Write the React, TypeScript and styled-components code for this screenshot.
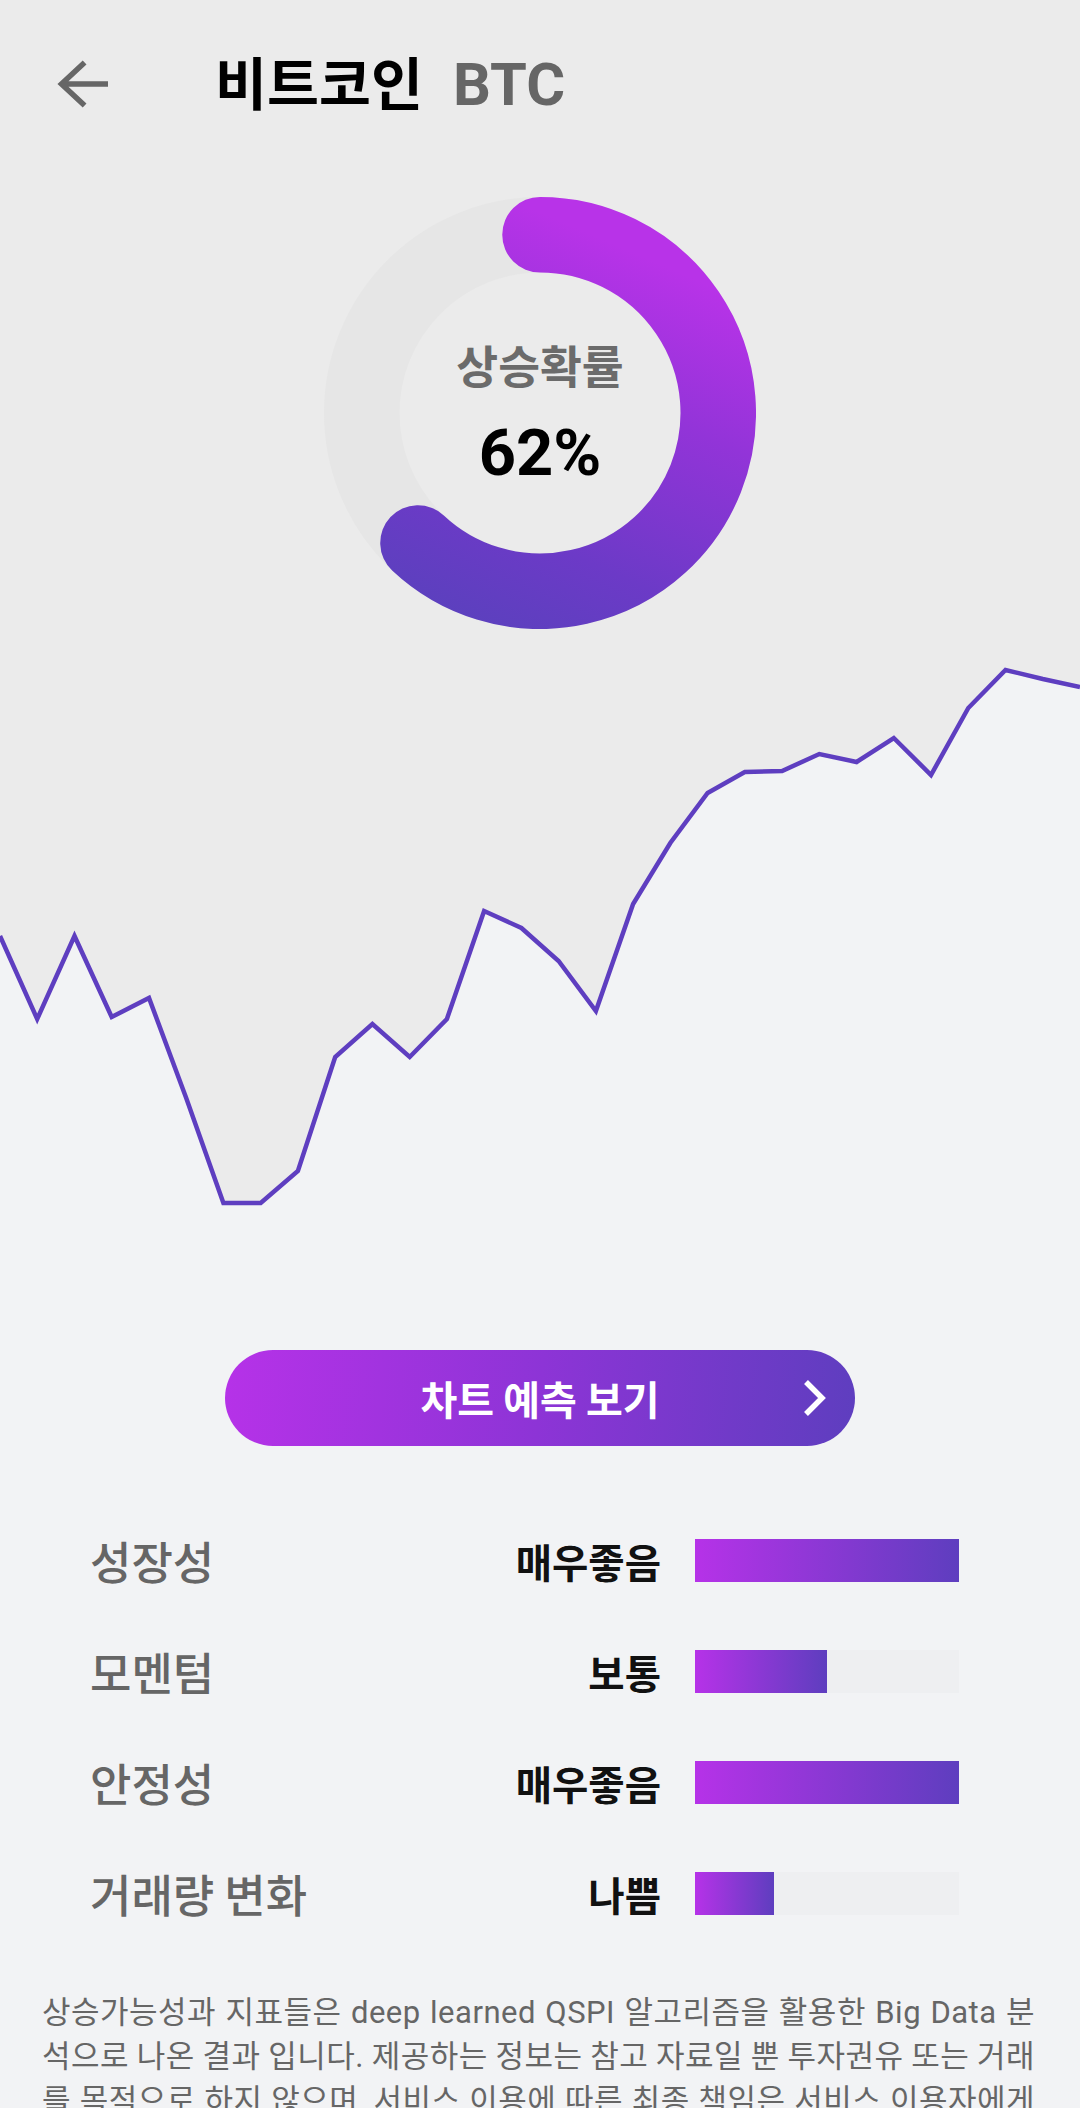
import React from "react";
import styled, { createGlobalStyle } from "styled-components";

const GlobalStyle = createGlobalStyle`
  html, body { margin: 0; padding: 0; background: #F2F3F5; }
  body { font-family: Roboto, "Noto Sans CJK KR", sans-serif; }
  * { box-sizing: border-box; }
`;

const Page = styled.div`
  width: 1080px;
  min-height: 2108px;
  overflow: hidden;
  background: #F2F3F5;
  display: flex;
  flex-direction: column;
`;

const Hero = styled.section`
  background: #EBEBEB;
  height: 650px;
  display: flex;
  flex-direction: column;
  align-items: center;
`;

const Header = styled.header`
  align-self: stretch;
  height: 168px;
  display: flex;
  align-items: center;
  padding-left: 57px;
`;

const BackButton = styled.button`
  border: 0;
  background: none;
  padding: 0;
  width: 56px;
  height: 56px;
  display: flex;
  margin-right: 102px;
  cursor: pointer;
`;

const Title = styled.h1`
  margin: 0;
  display: flex;
  align-items: baseline;
  gap: 30px;
  font-weight: 700;
`;

const TitleKo = styled.span`
  font-family: "Noto Sans CJK KR", sans-serif;
  font-size: 56.5px;
  line-height: 1;
  color: #000;
`;

const TitleCode = styled.span`
  font-family: Roboto, sans-serif;
  font-size: 59.5px;
  line-height: 1;
  color: #666;
`;

const Donut = styled.div`
  margin-top: 29px;
  width: 432px;
  height: 432px;
  display: grid;
  & > * {
    grid-area: 1 / 1;
  }
`;

const DonutCenter = styled.div`
  display: flex;
  flex-direction: column;
  align-items: center;
  justify-content: center;
  gap: 27px;
`;

const DonutLabel = styled.span`
  font-family: "Noto Sans CJK KR", sans-serif;
  font-size: 45.5px;
  line-height: 52px;
  font-weight: 700;
  color: #6b6b6b;
`;

const DonutValue = styled.span`
  font-family: Roboto, sans-serif;
  font-size: 65px;
  line-height: 72px;
  font-weight: 700;
  color: #000;
`;

const Chart = styled.svg`
  display: block;
  width: 1080px;
  height: 580px;
`;

const PredictButton = styled.button`
  margin: 120px auto 0;
  width: 630px;
  height: 96px;
  border: 0;
  border-radius: 48px;
  background: linear-gradient(95deg, #b632e8 0%, #8d34d6 50%, #5e3ebf 100%);
  display: grid;
  grid-template-columns: 1fr auto 1fr;
  align-items: center;
  padding: 0 27px;
  color: #fff;
  cursor: pointer;
`;

const ButtonText = styled.span`
  grid-column: 2;
  font-family: "Noto Sans CJK KR", sans-serif;
  font-size: 40px;
  font-weight: 700;
  line-height: 1;
`;

const ButtonChevron = styled.svg`
  grid-column: 3;
  justify-self: end;
  display: block;
`;

const Metrics = styled.ul`
  list-style: none;
  margin: 59px 0 0;
  padding: 0 121px 0 90px;
`;

const MetricRow = styled.li`
  height: 111px;
  display: grid;
  grid-template-columns: 1fr auto 264px;
  column-gap: 34px;
  align-items: center;
`;

const MetricLabel = styled.span`
  font-family: "Noto Sans CJK KR", sans-serif;
  font-size: 45px;
  font-weight: 500;
  color: #666;
`;

const MetricValue = styled.span`
  font-family: "Noto Sans CJK KR", sans-serif;
  font-size: 39.5px;
  font-weight: 700;
  color: #111;
`;

const BarTrack = styled.div`
  height: 43px;
  background: #eeeff1;
`;

const BarFill = styled.div<{ $pct: number }>`
  height: 100%;
  width: ${(p) => p.$pct}%;
  background: linear-gradient(90deg, #b632e8 0%, #5e3ebf 100%);
`;

const Disclaimer = styled.p`
  margin: 42px 0 0;
  padding: 0 45px 0 42px;
  font-family: Roboto, "Noto Sans CJK KR", sans-serif;
  font-size: 31px;
  letter-spacing: 0.5px;
  word-spacing: -1.8px;
  line-height: 44px;
  color: #666;
  text-align: justify;
  word-break: break-all;
`;

const chartY = [
  936, 1019, 936, 1017, 998, 1098, 1203, 1203, 1171, 1057, 1024, 1057, 1019, 911,
  928, 961, 1011, 904, 843, 793, 772, 771, 754, 762, 738, 775, 708, 670, 679, 687,
];
const CHART_TOP = 650;
const linePts = chartY
  .map((y, i) => `${((i * 1080) / 29).toFixed(1)},${y - CHART_TOP}`)
  .join(" ");
const areaPts = `0,0 ${linePts} 1080,0`;

const metrics = [
  { label: "성장성", value: "매우좋음", pct: 100 },
  { label: "모멘텀", value: "보통", pct: 50 },
  { label: "안정성", value: "매우좋음", pct: 100 },
  { label: "거래량 변화", value: "나쁨", pct: 30 },
];

const R = 178.25;
const PROB = 0.62;
const theta = PROB * 2 * Math.PI;
const endX = 216 + R * Math.sin(theta);
const endY = 216 - R * Math.cos(theta);
const arcPath = `M216 ${216 - R} A${R} ${R} 0 ${PROB > 0.5 ? 1 : 0} 1 ${endX.toFixed(2)} ${endY.toFixed(2)}`;

export default function App() {
  return (
    <>
      <GlobalStyle />
      <Page>
        <Hero>
          <Header>
            <BackButton aria-label="뒤로">
              <svg width="56" height="56" viewBox="0 0 56 56">
                <path
                  d="M51 28 H5 M27.6 6.5 L4.5 28 L27.6 49.5"
                  fill="none"
                  stroke="#666"
                  strokeWidth="5.5"
                />
              </svg>
            </BackButton>
            <Title>
              <TitleKo>비트코인</TitleKo>
              <TitleCode>BTC</TitleCode>
            </Title>
          </Header>
          <Donut>
            <svg width="432" height="432" viewBox="0 0 432 432">
              <defs>
                <linearGradient id="ringGrad" gradientUnits="userSpaceOnUse" x1="250" y1="30" x2="90" y2="400">
                  <stop offset="0" stopColor="#b833e8" />
                  <stop offset="0.35" stopColor="#9234d8" />
                  <stop offset="0.75" stopColor="#6c3ac7" />
                  <stop offset="1" stopColor="#5c40be" />
                </linearGradient>
              </defs>
              <circle cx="216" cy="216" r={R} fill="none" stroke="#e6e6e6" strokeWidth="75.5" />
              <path
                d={arcPath}
                fill="none"
                stroke="url(#ringGrad)"
                strokeWidth="75.5"
                strokeLinecap="round"
              />
            </svg>
            <DonutCenter>
              <DonutLabel>상승확률</DonutLabel>
              <DonutValue>62%</DonutValue>
            </DonutCenter>
          </Donut>
        </Hero>
        <Chart viewBox="0 0 1080 580" preserveAspectRatio="none">
          <polygon points={areaPts} fill="#EBEBEB" />
          <polyline
            points={linePts}
            fill="none"
            stroke="#5e3ec0"
            strokeWidth="4.5"
            strokeLinejoin="miter"
          />
        </Chart>
        <PredictButton>
          <ButtonText>차트 예측 보기</ButtonText>
          <ButtonChevron width="26" height="40" viewBox="0 0 26 40">
            <path d="M4 4 L20 20 L4 36" fill="none" stroke="#fff" strokeWidth="5.5" />
          </ButtonChevron>
        </PredictButton>
        <Metrics>
          {metrics.map((m) => (
            <MetricRow key={m.label}>
              <MetricLabel>{m.label}</MetricLabel>
              <MetricValue>{m.value}</MetricValue>
              <BarTrack>
                <BarFill $pct={m.pct} />
              </BarTrack>
            </MetricRow>
          ))}
        </Metrics>
        <Disclaimer>
          상승가능성과 지표들은 deep learned QSPI 알고리즘을 활용한 Big Data 분석으로 나온 결과
          입니다. 제공하는 정보는 참고 자료일 뿐 투자권유 또는 거래를 목적으로 하지 않으며, 서비스
          이용에 따른 최종 책임은 서비스 이용자에게 있습니다.
        </Disclaimer>
      </Page>
    </>
  );
}
